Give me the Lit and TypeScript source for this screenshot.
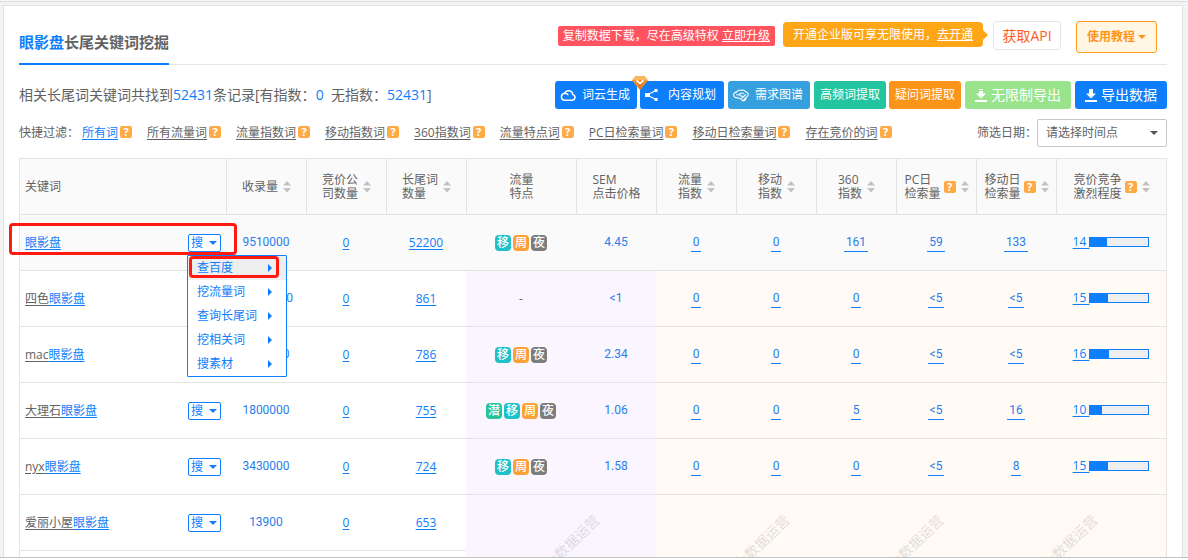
import { LitElement, html, css, svg, nothing } from "lit";
import { customElement, state } from "lit/decorators.js";

interface Row {
  prefix: string;
  indexed: string;
  longTail: string;
  tags?: string[];
  price?: string;
  stats?: string[];
  rivalry?: number;
}

const TERM = "眼影盘";

const FILTERS = ["所有词", "所有流量词", "流量指数词", "移动指数词", "360指数词", "流量特点词", "PC日检索量词", "移动日检索量词", "存在竞价的词"];

const COLUMNS = [
  { lines: ["关键词"], wide: true },
  { lines: ["收录量"], sort: true },
  { lines: ["竞价公", "司数量"], sort: true },
  { lines: ["长尾词", "数量"], sort: true },
  { lines: ["流量", "特点"] },
  { lines: ["SEM", "点击价格"] },
  { lines: ["流量", "指数"], sort: true },
  { lines: ["移动", "指数"], sort: true },
  { lines: ["360", "指数"], sort: true },
  { lines: ["PC日", "检索量"], sort: true, help: true },
  { lines: ["移动日", "检索量"], sort: true, help: true },
  { lines: ["竞价竞争", "激烈程度"], sort: true, help: true },
] as { lines: string[]; wide?: boolean; sort?: boolean; help?: boolean }[];

const ROWS: Row[] = [
  { prefix: "", indexed: "9510000", longTail: "52200", tags: ["移", "周", "夜"], price: "4.45", stats: ["0", "0", "161", "59", "133"], rivalry: 14 },
  { prefix: "四色", indexed: "10000000", longTail: "861", tags: [], price: "<1", stats: ["0", "0", "0", "<5", "<5"], rivalry: 15 },
  { prefix: "mac", indexed: "1000000", longTail: "786", tags: ["移", "周", "夜"], price: "2.34", stats: ["0", "0", "0", "<5", "<5"], rivalry: 16 },
  { prefix: "大理石", indexed: "1800000", longTail: "755", tags: ["潜", "移", "周", "夜"], price: "1.06", stats: ["0", "0", "5", "<5", "16"], rivalry: 10 },
  { prefix: "nyx", indexed: "3430000", longTail: "724", tags: ["移", "周", "夜"], price: "1.58", stats: ["0", "0", "0", "<5", "8"], rivalry: 15 },
  { prefix: "爱丽小屋", indexed: "13900", longTail: "653" },
];

const TAG_CLASS: Record<string, string> = { 潜: "green", 移: "teal", 周: "amber", 夜: "gray" };
const MENU = ["查百度", "挖流量词", "查询长尾词", "挖相关词", "搜素材"];

const cloudIcon = svg`<svg width="16" height="12" viewBox="0 0 16 12" fill="none" stroke="#fff" stroke-width="1.5" stroke-linejoin="round"><path d="M4.2 11.2h8a2.9 2.9 0 0 0 .6-5.7A4.3 4.3 0 0 0 4.6 4.300 A3.500 3.500 0 0 0 4.200 11.200z"/><path d="M4.600 4.500c1.600-.3 3 .5 3.700 1.700"/></svg>`;
const shareIcon = svg`<svg width="13" height="12" viewBox="0 0 13 12" fill="#fff"><path d="M2 6 10.500 1.700M2 6l8.500 4.300" stroke="#fff" stroke-width="1.100"/><rect x="0" y="4" width="5" height="4"/><rect x="9.500" y="0" width="3" height="3"/><rect x="9.500" y="9" width="3" height="3"/></svg>`;
const graphIcon = svg`<svg width="16" height="13" viewBox="0 0 16 13" fill="none" stroke="#fff" stroke-width="1.100" stroke-linejoin="round" stroke-linecap="round"><path d="M4 8.600C1.800 8.800.6 7.200.7 5.600.8 4 2.200 3 3.600 3.200 4.300 1.300 6.500.5 8.200 1.400c1.600-.9 3.800-.2 4.300 1.400 1.800.1 2.900 1.600 2.700 3-.1 1.300-.9 2.100-1.900 2.500-.1 2-1.500 3.400-3 3.700C8.600 11.400 8.200 9.600 6.800 9.300 5.700 9.100 4.600 9.300 4 8.600z"/><path d="M3.700 5.700h2.600l1.400-1.500h3M6.500 5.800l1.600 1.400h3.200l1.300-1.500M9 9.200l2-1.800M10.400 11.400 12.600 8.800"/></svg>`;
const downloadIcon = svg`<svg width="12" height="13" viewBox="0 0 12 13" fill="#fff"><path d="M4 0h4v4.500h3L6 9.500l-5-5h3z"/><rect x="0" y="11" width="12" height="2"/></svg>`;
const limitlessIcon = svg`<svg width="12" height="13" viewBox="0 0 12 13" fill="#fff"><path d="M4 0h4v1H4zM4 2h4v2.500h3L6 9.500l-5-5h3z"/><rect x="0" y="11" width="12" height="2"/></svg>`;
const gem = html`<svg class="gem" width="16" height="14" viewBox="0 0 16 14" aria-hidden="true">
  <path d="M3.500 0h9L16 4.500 8 14 0 4.500z" fill="#f08c1e"/><path d="M3.500 0h9L16 4.500H0z" fill="#fbb860"/><path d="M5 4.500h6L8 14z" fill="#e2711a"/>
  <path d="M4.700 4.300 8 7.600l3.300-3.300" fill="none" stroke="#fff" stroke-width="1.800"/></svg>`;
const sortIcon = html`<svg width="8" height="12" viewBox="0 0 8 12" fill="#c2c2c2" aria-hidden="true"><path d="M4 0l4 4.500H0zM0 7h8l-4 4.500z"/></svg>`;
const help = html`<span class="help">?</span>`;

@customElement("app-root")
export class AppRoot extends LitElement {
  @state() private openRow = 0;

  static styles = css`
    :host {
      --blue: #0e7efb;
      display: block;
      font: 12px/14px "Open Sans", "Noto Sans CJK SC", sans-serif;
      color: #626262;
    }
    * { box-sizing: border-box; }
    button, select { font: inherit; color: inherit; margin: 0; }
    button { cursor: pointer; padding: 0; white-space: nowrap; }
    a { color: inherit; }
    svg { display: block; flex: none; }

    .page { display: flex; flex-direction: column; height: 100vh; background: #f3f3f3; border-top: 1px solid #f6f8f8; }
    .scroll { flex: 1; min-height: 0; overflow: hidden; border-top: 1px solid #dcdfdf; padding: 3px 5px 0 3px; }
    .edge { height: 3px; border-top: 1px solid #c3c3c3; background: #fff; }
    .panel { background: #fff; border: 1px solid #e2e2e2; padding: 15px 15px 40px; }

    .head { display: flex; justify-content: space-between; align-items: flex-start; border-bottom: 1px solid #e6e6e6; }
    h1 { margin: 0 0 -1px; font-size: 15px; line-height: 42px; font-weight: 700; border-bottom: 2px solid var(--blue); white-space: nowrap; }
    .hit { color: var(--blue); }
    .tools { display: flex; align-items: flex-start; padding-right: 10px; white-space: nowrap; }
    .promo { margin: 5px 8px 0 0; padding: 0 5px; line-height: 20px; background: #ff5460; color: #fff; border-radius: 2px; }
    .tip { position: relative; margin: 1px 10px 0 0; padding: 0 10px; line-height: 25px; background: #ffa616; color: #fff; border-radius: 4px; }
    .tip::after { content: ""; position: absolute; left: 100%; top: 8px; border: 5px solid transparent; border-left-color: #ffa616; border-right-width: 0; }
    .api { margin-right: 15px; width: 68px; height: 29px; font-size: 14px; color: #ff5b22; background: #fff; border: 1px solid #e6e6e6; border-radius: 3px; }
    .guide { width: 81px; height: 32px; display: flex; align-items: center; justify-content: center; gap: 3px; font-weight: 700; color: #ff9518; background: #fff6e4; border: 1px solid #ff9a1c; border-radius: 3px; }
    .caret { border: 4px solid transparent; border-top-color: currentColor; border-bottom-width: 0; }

    .summary { display: flex; align-items: center; justify-content: space-between; padding-top: 16px; }
    .count { margin: 0; font-size: 14px; line-height: 26px; white-space: pre; }
    .actions, .pair { display: flex; gap: 4px; }
    .pair { gap: 3px; }
    .act { position: relative; display: flex; align-items: center; height: 28px; border: 0; border-radius: 3px; color: #fff; background: var(--blue); padding: 0 7px 0 5px; gap: 6px; }
    .act.plan { padding-right: 8px; gap: 10px; }
    .act.graph { background: #369fde; }
    .act.freq { background: #22c59f; padding: 0 6px; }
    .act.ask { background: #fb9519; padding: 0 6px; }
    .act.big { font-size: 14px; padding: 0 10px; gap: 4px; }
    .act.free { background: #98e38b; }
    .gem { position: absolute; left: -8px; top: -5px; }

    .filters { display: flex; align-items: center; justify-content: space-between; padding-top: 10px; white-space: nowrap; }
    .links { display: flex; gap: 15px; align-items: center; }
    .quick { margin-right: -12px; }
    .filter { display: flex; align-items: flex-start; gap: 2px; }
    .filter a { text-decoration: underline; text-underline-offset: 2px; }
    .filter a.on { color: var(--blue); }
    .help { display: inline-block; width: 12px; height: 12px; border-radius: 2px; background: #ffab45; color: #fff; font: 700 11px/12px "Open Sans", sans-serif; text-align: center; }
    .date { display: flex; align-items: center; }
    .pick { position: relative; }
    .pick::after { content: ""; position: absolute; right: 9px; top: 12px; border: 4px solid transparent; border-top-color: #555; border-bottom-width: 0; pointer-events: none; }
    select { display: block; width: 130px; height: 28px; padding: 0 8px; appearance: none; background: #fff; border: 1px solid #c6c6c6; border-radius: 2px; }

    table { width: 100%; margin-top: 11px; table-layout: fixed; border-collapse: separate; border-spacing: 0; border-right: 1px solid #e4e4e4; }
    col.c80 { width: 80px; }
    col.c110 { width: 110px; }
    th { height: 56px; padding: 0; font-weight: 400; background: #fafafa; border: solid #e4e4e4; border-width: 1px 0 0 1px; }
    td { height: 56px; padding: 0; text-align: center; border-top: 1px solid #e4e4e4; }
    td:first-child { position: relative; border-left: 1px solid #e4e4e4; }
    .label { display: flex; align-items: center; justify-content: center; text-align: left; gap: 5px; }
    .label.wide { justify-content: flex-start; padding-left: 5px; }
    .named { display: flex; align-items: center; gap: 3px; }
    .feature { background: #faf5ff; }
    .traffic { background: #fffaf3; }
    tr.current td { background: #fafafa; }

    .keyword { display: flex; align-items: center; justify-content: space-between; padding: 1px 5px 0; }
    .keyword a { text-decoration: none; }
    .keyword a span, .num { text-decoration: underline; text-underline-offset: 2px; }
    .finder { position: relative; }
    .find { display: flex; align-items: center; gap: 6px; width: 33px; height: 18px; padding: 0 2px; color: var(--blue); background: #fff; border: 1px solid var(--blue); border-radius: 2px; }
    .menu { position: absolute; z-index: 2; left: -1px; top: 21px; width: 100px; margin: 0; padding: 0; list-style: none; background: #fff; border: 1px solid var(--blue); border-radius: 1px; }
    .menu li { position: relative; }
    .menu button { display: flex; align-items: center; justify-content: space-between; width: 100%; height: 24px; padding: 0 14px 0 9px; border: 0; background: none; color: var(--blue); }
    .menu button::after { content: ""; border: 4px solid transparent; border-left-color: currentColor; border-right-width: 0; }
    .menu li:first-child button { background: #eee; }
    .mark { position: absolute; z-index: 1; border: 3px solid #ff1a10; border-radius: 4px; pointer-events: none; }
    .mark.row { inset: 8px -11px 15px -11px; }
    .mark.item { inset: 0 7px 2px 1px; }

    .plain, .stat { display: inline-block; font-family: Roboto, sans-serif; color: #2b7de9; }
    .plain { padding-bottom: 2px; }
    .num { color: var(--blue); }
    .stat { padding: 0 2px 1px; line-height: 16px; border-bottom: 1px solid var(--blue); text-decoration: none; }
    .tags { display: flex; justify-content: center; gap: 2px; padding-top: 1px; }
    .tag { width: 16px; height: 16px; border-radius: 4px; color: #fff; font-weight: 500; line-height: 16px; }
    .green { background: #24c49c; }
    .teal { background: #1fc2c9; }
    .amber { background: #fca136; }
    .gray { background: #7d7d7d; }
    .rival { display: flex; align-items: center; justify-content: center; padding-bottom: 2px; }
    .rival a { white-space: pre; }
    .bar { width: 60px; height: 10px; background: #eee; border: 1px solid var(--blue); }
    .fill { height: 100%; background: var(--blue); }

    td.stamp { vertical-align: top; overflow: hidden; }
    .stamps { display: flex; gap: 84px; padding: 39px 0 0 71px; }
    .stamps span { flex: none; width: 70px; font-size: 14px; line-height: 16px; color: rgba(90, 90, 90, 0.2); transform: rotate(-44deg); }
  `;

  private renderFind(i: number) {
    return html`<div class="finder">
      <button class="find" aria-expanded=${this.openRow === i ? "true" : "false"} @click=${() => (this.openRow = this.openRow === i ? -1 : i)}>搜<i class="caret"></i></button>
      ${this.openRow === i
        ? html`<ul class="menu">${MENU.map((m, k) => html`<li><button>${m}</button>${k === 0 ? html`<i class="mark item"></i>` : nothing}</li>`)}</ul>`
        : nothing}
    </div>`;
  }

  private renderRow(r: Row, i: number) {
    return html`<tr class=${i === 0 ? "current" : ""}>
      <td>
        <div class="keyword">
          <a href="#">${r.prefix ? html`<span>${r.prefix}</span>` : nothing}<span class="hit">${TERM}</span></a>
          ${this.renderFind(i)}
        </div>
        ${i === 0 ? html`<i class="mark row"></i>` : nothing}
      </td>
      <td><span class="plain">${r.indexed}</span></td>
      <td><a class="num" href="#">0</a></td>
      <td><a class="num" href="#">${r.longTail}</a></td>
      ${r.stats
        ? html`
            <td class="feature">
              ${r.tags!.length ? html`<div class="tags">${r.tags!.map((t) => html`<span class="tag ${TAG_CLASS[t]}">${t}</span>`)}</div>` : "-"}
            </td>
            <td class="feature"><span class="plain">${r.price}</span></td>
            ${r.stats.map((s) => html`<td class="traffic"><a class="stat" href="#">${s}</a></td>`)}
            <td class="traffic">
              <div class="rival"><a class="num" href="#">${r.rivalry + " "}</a><div class="bar"><div class="fill" style="width:${r.rivalry! * 2}%"></div></div></div>
            </td>`
        : html`
            <td class="feature stamp" colspan="2" rowspan="2"><div class="stamps"><span>大数据运营</span></div></td>
            <td class="traffic stamp" colspan="6" rowspan="2"><div class="stamps"><span>大数据运营</span><span>大数据运营</span><span>大数据运营</span></div></td>`}
    </tr>`;
  }

  render() {
    return html`<div class="page">
      <div class="scroll">
        <main class="panel">
          <header class="head">
            <h1><span class="hit">${TERM}</span>长尾关键词挖掘</h1>
            <div class="tools">
              <span class="promo">复制数据下载，尽在高级特权 <a href="#">立即升级</a></span>
              <span class="tip">开通企业版可享无限使用，<a href="#">去开通</a></span>
              <button class="api">获取API</button>
              <button class="guide">使用教程<i class="caret"></i></button>
            </div>
          </header>

          <section class="summary">
            <p class="count">相关长尾词关键词共找到<span class="hit">52431</span>条记录[有指数：<span class="hit">0</span>  无指数：<span class="hit">52431</span>]</p>
            <div class="actions">
              <div class="pair">
                <button class="act">${cloudIcon}词云生成</button>
                <button class="act plan">${shareIcon}内容规划${gem}</button>
              </div>
              <button class="act graph">${graphIcon}需求图谱</button>
              <div class="pair">
                <button class="act freq">高频词提取</button>
                <button class="act ask">疑问词提取</button>
              </div>
              <button class="act big free">${limitlessIcon}无限制导出</button>
              <button class="act big">${downloadIcon}导出数据</button>
            </div>
          </section>

          <section class="filters">
            <div class="links">
              <span class="quick">快捷过滤：</span>
              ${FILTERS.map((f, i) => html`<span class="filter"><a class=${i === 0 ? "on" : ""} href="#">${f}</a>${help}</span>`)}
            </div>
            <div class="date">
              <label for="date">筛选日期：</label>
              <div class="pick"><select id="date"><option>请选择时间点</option></select></div>
            </div>
          </section>

          <table>
            <colgroup>
              <col /><col class="c80" /><col class="c80" /><col class="c80" /><col class="c110" /><col class="c80" />
              <col class="c80" /><col class="c80" /><col class="c80" /><col class="c80" /><col class="c80" /><col class="c110" />
            </colgroup>
            <thead>
              <tr>
                ${COLUMNS.map(
                  (c) => html`<th scope="col"><div class="label ${c.wide ? "wide" : ""}">
                    <span class="named"><span>${c.lines.map((l, i) => (i ? html`<br />${l}` : l))}</span>${c.help ? help : nothing}</span>${c.sort ? sortIcon : nothing}
                  </div></th>`
                )}
              </tr>
            </thead>
            <tbody>
              ${ROWS.map((r, i) => this.renderRow(r, i))}
              <tr><td></td><td></td><td></td><td></td></tr>
            </tbody>
          </table>
        </main>
      </div>
      <div class="edge"></div>
    </div>`;
  }
}
